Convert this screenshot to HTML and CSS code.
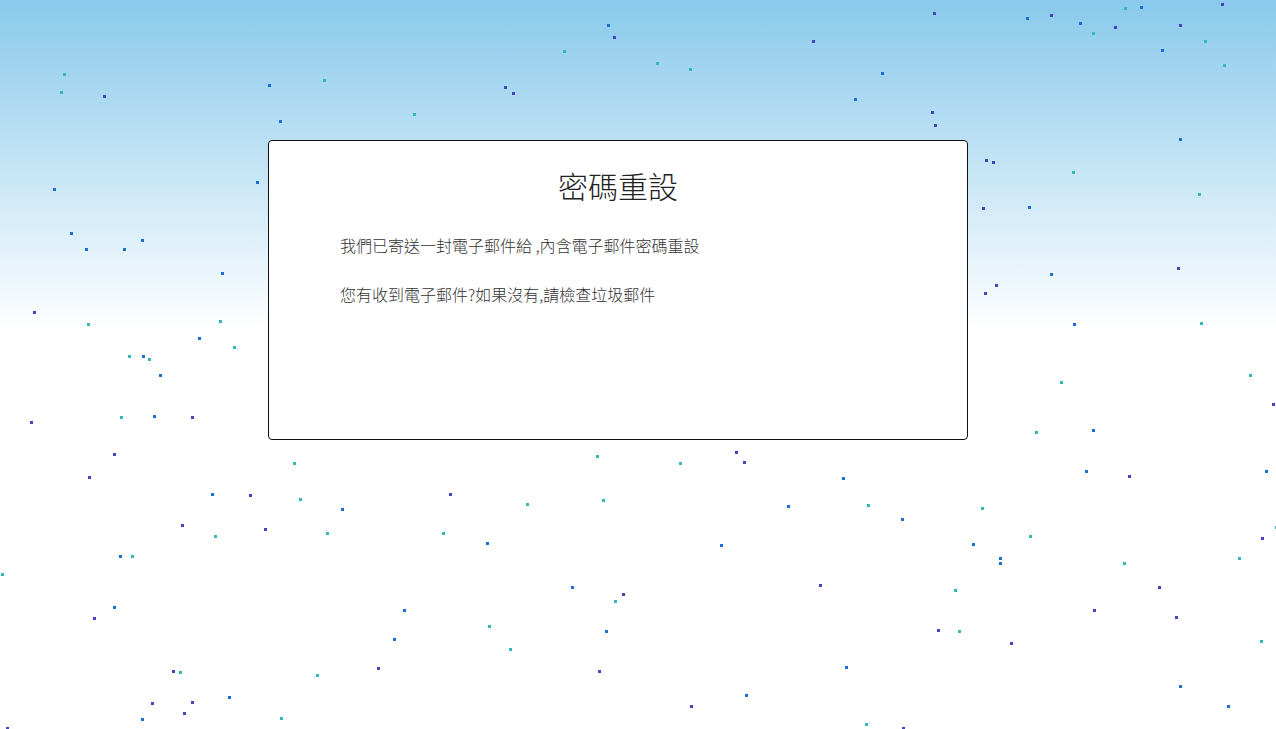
FILE: index.html
```html
<!DOCTYPE html>
<html lang="zh-Hant">
<head>
<meta charset="utf-8">
<title>密碼重設</title>
<link rel="stylesheet" href="styles.css">
</head>
<body>
<div class="sky" aria-hidden="true">
<i class="d t" style="left:63px;top:73px"></i>
<i class="d t" style="left:60px;top:91px"></i>
<i class="d p" style="left:103px;top:95px"></i>
<i class="d b" style="left:268px;top:84px"></i>
<i class="d t" style="left:323px;top:79px"></i>
<i class="d b" style="left:279px;top:120px"></i>
<i class="d t" style="left:413px;top:113px"></i>
<i class="d b" style="left:53px;top:188px"></i>
<i class="d b" style="left:256px;top:181px"></i>
<i class="d b" style="left:70px;top:232px"></i>
<i class="d b" style="left:85px;top:248px"></i>
<i class="d b" style="left:123px;top:248px"></i>
<i class="d b" style="left:141px;top:239px"></i>
<i class="d b" style="left:221px;top:272px"></i>
<i class="d p" style="left:33px;top:311px"></i>
<i class="d t" style="left:87px;top:323px"></i>
<i class="d t" style="left:219px;top:320px"></i>
<i class="d b" style="left:198px;top:337px"></i>
<i class="d t" style="left:233px;top:346px"></i>
<i class="d t" style="left:128px;top:355px"></i>
<i class="d b" style="left:142px;top:355px"></i>
<i class="d t" style="left:148px;top:358px"></i>
<i class="d b" style="left:607px;top:24px"></i>
<i class="d p" style="left:613px;top:36px"></i>
<i class="d t" style="left:563px;top:50px"></i>
<i class="d t" style="left:656px;top:62px"></i>
<i class="d t" style="left:689px;top:68px"></i>
<i class="d p" style="left:504px;top:86px"></i>
<i class="d p" style="left:512px;top:92px"></i>
<i class="d p" style="left:812px;top:40px"></i>
<i class="d p" style="left:933px;top:12px"></i>
<i class="d b" style="left:1026px;top:17px"></i>
<i class="d p" style="left:1050px;top:14px"></i>
<i class="d b" style="left:1079px;top:22px"></i>
<i class="d t" style="left:1092px;top:32px"></i>
<i class="d p" style="left:1114px;top:26px"></i>
<i class="d t" style="left:1124px;top:7px"></i>
<i class="d b" style="left:1140px;top:6px"></i>
<i class="d p" style="left:1221px;top:3px"></i>
<i class="d p" style="left:1179px;top:24px"></i>
<i class="d t" style="left:1204px;top:40px"></i>
<i class="d b" style="left:1161px;top:49px"></i>
<i class="d t" style="left:1223px;top:64px"></i>
<i class="d b" style="left:881px;top:72px"></i>
<i class="d b" style="left:854px;top:98px"></i>
<i class="d p" style="left:931px;top:111px"></i>
<i class="d p" style="left:934px;top:124px"></i>
<i class="d b" style="left:1179px;top:138px"></i>
<i class="d p" style="left:985px;top:159px"></i>
<i class="d p" style="left:992px;top:161px"></i>
<i class="d t" style="left:1072px;top:171px"></i>
<i class="d t" style="left:1198px;top:193px"></i>
<i class="d p" style="left:982px;top:207px"></i>
<i class="d b" style="left:1028px;top:206px"></i>
<i class="d p" style="left:1177px;top:267px"></i>
<i class="d b" style="left:1050px;top:273px"></i>
<i class="d p" style="left:995px;top:284px"></i>
<i class="d p" style="left:984px;top:292px"></i>
<i class="d b" style="left:1073px;top:323px"></i>
<i class="d t" style="left:1200px;top:322px"></i>
<i class="d b" style="left:159px;top:374px"></i>
<i class="d p" style="left:30px;top:421px"></i>
<i class="d t" style="left:120px;top:416px"></i>
<i class="d b" style="left:153px;top:415px"></i>
<i class="d p" style="left:191px;top:416px"></i>
<i class="d p" style="left:113px;top:453px"></i>
<i class="d p" style="left:88px;top:476px"></i>
<i class="d t" style="left:293px;top:462px"></i>
<i class="d b" style="left:211px;top:493px"></i>
<i class="d p" style="left:249px;top:494px"></i>
<i class="d t" style="left:299px;top:498px"></i>
<i class="d b" style="left:341px;top:508px"></i>
<i class="d p" style="left:181px;top:524px"></i>
<i class="d t" style="left:214px;top:535px"></i>
<i class="d p" style="left:264px;top:528px"></i>
<i class="d t" style="left:326px;top:532px"></i>
<i class="d b" style="left:119px;top:555px"></i>
<i class="d t" style="left:131px;top:555px"></i>
<i class="d t" style="left:1px;top:573px"></i>
<i class="d b" style="left:113px;top:606px"></i>
<i class="d p" style="left:93px;top:617px"></i>
<i class="d b" style="left:403px;top:609px"></i>
<i class="d b" style="left:393px;top:638px"></i>
<i class="d p" style="left:377px;top:667px"></i>
<i class="d p" style="left:172px;top:670px"></i>
<i class="d t" style="left:179px;top:671px"></i>
<i class="d t" style="left:316px;top:674px"></i>
<i class="d b" style="left:228px;top:696px"></i>
<i class="d p" style="left:151px;top:702px"></i>
<i class="d p" style="left:191px;top:701px"></i>
<i class="d p" style="left:183px;top:712px"></i>
<i class="d t" style="left:280px;top:717px"></i>
<i class="d b" style="left:141px;top:718px"></i>
<i class="d p" style="left:6px;top:727px"></i>
<i class="d p" style="left:735px;top:451px"></i>
<i class="d p" style="left:743px;top:461px"></i>
<i class="d t" style="left:596px;top:455px"></i>
<i class="d t" style="left:679px;top:462px"></i>
<i class="d b" style="left:842px;top:477px"></i>
<i class="d p" style="left:449px;top:493px"></i>
<i class="d t" style="left:526px;top:503px"></i>
<i class="d t" style="left:602px;top:499px"></i>
<i class="d b" style="left:787px;top:505px"></i>
<i class="d t" style="left:442px;top:532px"></i>
<i class="d b" style="left:486px;top:542px"></i>
<i class="d b" style="left:720px;top:544px"></i>
<i class="d b" style="left:571px;top:586px"></i>
<i class="d p" style="left:622px;top:593px"></i>
<i class="d t" style="left:614px;top:600px"></i>
<i class="d p" style="left:819px;top:584px"></i>
<i class="d t" style="left:488px;top:625px"></i>
<i class="d b" style="left:605px;top:630px"></i>
<i class="d t" style="left:509px;top:648px"></i>
<i class="d p" style="left:598px;top:670px"></i>
<i class="d b" style="left:845px;top:666px"></i>
<i class="d b" style="left:745px;top:694px"></i>
<i class="d p" style="left:690px;top:705px"></i>
<i class="d t" style="left:1060px;top:381px"></i>
<i class="d t" style="left:1249px;top:374px"></i>
<i class="d p" style="left:1272px;top:403px"></i>
<i class="d t" style="left:1035px;top:431px"></i>
<i class="d b" style="left:1092px;top:429px"></i>
<i class="d b" style="left:1085px;top:470px"></i>
<i class="d p" style="left:1128px;top:475px"></i>
<i class="d b" style="left:1265px;top:470px"></i>
<i class="d t" style="left:867px;top:504px"></i>
<i class="d t" style="left:981px;top:507px"></i>
<i class="d b" style="left:901px;top:518px"></i>
<i class="d t" style="left:1029px;top:535px"></i>
<i class="d b" style="left:972px;top:543px"></i>
<i class="d b" style="left:999px;top:557px"></i>
<i class="d b" style="left:999px;top:562px"></i>
<i class="d t" style="left:1275px;top:526px"></i>
<i class="d p" style="left:1261px;top:537px"></i>
<i class="d t" style="left:1238px;top:557px"></i>
<i class="d t" style="left:1123px;top:562px"></i>
<i class="d t" style="left:954px;top:589px"></i>
<i class="d p" style="left:1158px;top:586px"></i>
<i class="d p" style="left:1093px;top:609px"></i>
<i class="d p" style="left:1175px;top:616px"></i>
<i class="d p" style="left:937px;top:629px"></i>
<i class="d t" style="left:958px;top:630px"></i>
<i class="d p" style="left:1010px;top:642px"></i>
<i class="d t" style="left:1260px;top:640px"></i>
<i class="d b" style="left:1179px;top:685px"></i>
<i class="d b" style="left:1227px;top:705px"></i>
<i class="d t" style="left:865px;top:723px"></i>
<i class="d p" style="left:902px;top:727px"></i>
</div>
<main class="page">
  <section class="card">
    <h1 class="card-title">密碼重設</h1>
    <p class="card-text">我們已寄送一封電子郵件給 ,內含電子郵件密碼重設</p>
    <p class="card-text">您有收到電子郵件?如果沒有,請檢查垃圾郵件</p>
  </section>
</main>
</body>
</html>
```

FILE: styles.css
```css
* { box-sizing: border-box; }

html, body {
  margin: 0;
  height: 100%;
}

body {
  min-height: 729px;
  background: linear-gradient(to bottom, #89c9eb 0px, #ffffff 330px, #ffffff 100%);
  font-family: "Noto Sans CJK TC", "Noto Sans", sans-serif;
  color: #333;
  overflow: hidden;
}

.sky {
  position: fixed;
  inset: 0;
  z-index: 0;
  pointer-events: none;
}

.d {
  position: absolute;
  width: 3px;
  height: 3px;
}

.d.t { background: #36b9b4; }
.d.b { background: #1a6fd2; }
.d.p { background: #4444bb; }

.page {
  position: relative;
  z-index: 1;
  padding: 140px 0 0 268px;
}

.card {
  width: 700px;
  height: 300px;
  background: #fff;
  border: 1px solid #111;
  border-radius: 4px;
  padding: 23px 40px 0 71px;
}

.card-title {
  margin: 0 0 27px 0;
  font-size: 30px;
  line-height: 42px;
  font-weight: 300;
  text-align: center;
  color: #222;
  padding-right: 31px;
}

.card-text {
  margin: 0 0 25px 0;
  font-size: 16px;
  line-height: 24px;
  font-weight: 300;
  color: #333;
}
```
